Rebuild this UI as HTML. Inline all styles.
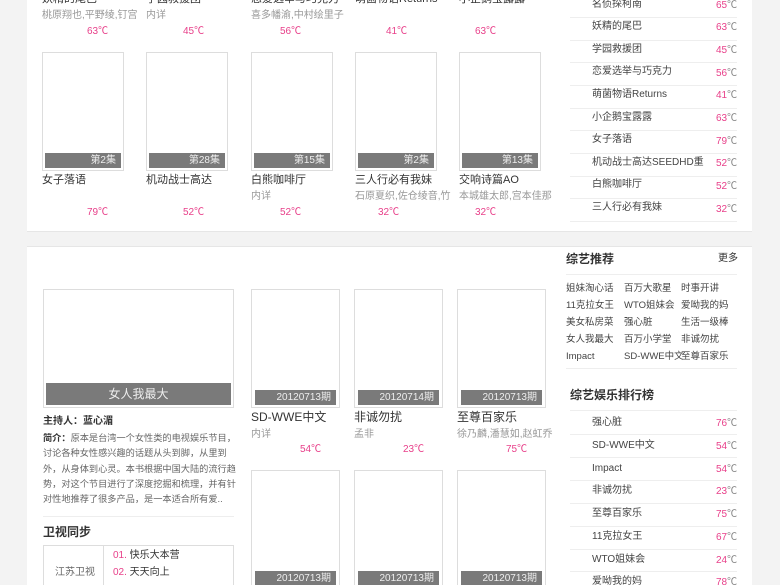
<!DOCTYPE html><html><head><meta charset="utf-8"><style>
*{margin:0;padding:0;box-sizing:border-box}
html,body{width:780px;height:585px;overflow:hidden}
body{background:#f3f3f3;font-family:"Liberation Sans","Noto Sans CJK SC",sans-serif;position:relative;color:#333;line-height:1.2}
.a{position:absolute;white-space:nowrap}
.p{position:absolute;background:#fff}
.box{position:absolute;border:1px solid #ddd;background:#fff}
.bar{position:absolute;background:#7a7a7a;color:#eee;font-size:10px;text-align:right;padding-right:5px}
.t{font-size:11px;color:#333}
.s{font-size:10px;color:#999}
.c{font-size:10px;color:#e8408a}
.line{position:absolute;height:1px;background:#eee}
.r{font-size:10px;color:#444}
.g{font-size:9.5px;color:#444;line-height:17px}
</style></head><body>
<div class="p" style="left:27px;top:-10px;width:725px;height:242px;border-bottom:1px solid #e6e6e6"></div>
<div class="p" style="left:27px;top:246px;width:725px;height:360px;border-top:1px solid #e6e6e6"></div>

<div class="a t" style="left:42px;top:-7px">妖精的尾巴</div><div class="a s" style="left:42px;top:10px">桃原翔也,平野绫,钉宫</div><div class="a c" style="left:87px;top:26px">63℃</div>
<div class="a t" style="left:146px;top:-7px">学园救援团</div><div class="a s" style="left:146px;top:10px">内详</div><div class="a c" style="left:183px;top:26px">45℃</div>
<div class="a t" style="left:251px;top:-7px">恋爱选举与巧克力</div><div class="a s" style="left:251px;top:10px">喜多幡渝,中村绘里子</div><div class="a c" style="left:280px;top:26px">56℃</div>
<div class="a t" style="left:355px;top:-7px">萌菌物语Returns</div><div class="a c" style="left:386px;top:26px">41℃</div>
<div class="a t" style="left:459px;top:-7px">小企鹅宝露露</div><div class="a c" style="left:475px;top:26px">63℃</div>

<div class="box" style="left:42px;top:52px;width:82px;height:119px"><div class="bar" style="left:2px;right:2px;top:100px;height:15px;line-height:15px">第2集</div></div>
<div class="box" style="left:146px;top:52px;width:82px;height:119px"><div class="bar" style="left:2px;right:2px;top:100px;height:15px;line-height:15px">第28集</div></div>
<div class="box" style="left:251px;top:52px;width:82px;height:119px"><div class="bar" style="left:2px;right:2px;top:100px;height:15px;line-height:15px">第15集</div></div>
<div class="box" style="left:355px;top:52px;width:82px;height:119px"><div class="bar" style="left:2px;right:2px;top:100px;height:15px;line-height:15px">第2集</div></div>
<div class="box" style="left:459px;top:52px;width:82px;height:119px"><div class="bar" style="left:2px;right:2px;top:100px;height:15px;line-height:15px">第13集</div></div>
<div class="a t" style="left:42px;top:174px">女子落语</div><div class="a c" style="left:87px;top:207px">79℃</div>
<div class="a t" style="left:146px;top:174px">机动战士高达</div><div class="a c" style="left:183px;top:207px">52℃</div>
<div class="a t" style="left:251px;top:174px">白熊咖啡厅</div><div class="a s" style="left:251px;top:191px">内详</div><div class="a c" style="left:280px;top:207px">52℃</div>
<div class="a t" style="left:355px;top:174px">三人行必有我妹</div><div class="a s" style="left:355px;top:191px">石原夏织,佐仓绫音,竹</div><div class="a c" style="left:378px;top:207px">32℃</div>
<div class="a t" style="left:459px;top:174px">交响诗篇AO</div><div class="a s" style="left:459px;top:191px">本城雄太郎,宫本佳那</div><div class="a c" style="left:475px;top:207px">32℃</div>

<div class="a r" style="left:592px;top:-1px">名侦探柯南</div><div class="a c" style="left:716px;top:0px">65<span style="color:#888">℃</span></div>
<div class="line" style="left:570px;top:17px;width:167px"></div>
<div class="a r" style="left:592px;top:21px">妖精的尾巴</div><div class="a c" style="left:716px;top:22px">63<span style="color:#888">℃</span></div>
<div class="line" style="left:570px;top:40px;width:167px"></div>
<div class="a r" style="left:592px;top:44px">学园救援团</div><div class="a c" style="left:716px;top:45px">45<span style="color:#888">℃</span></div>
<div class="line" style="left:570px;top:62px;width:167px"></div>
<div class="a r" style="left:592px;top:66px">恋爱选举与巧克力</div><div class="a c" style="left:716px;top:68px">56<span style="color:#888">℃</span></div>
<div class="line" style="left:570px;top:85px;width:167px"></div>
<div class="a r" style="left:592px;top:89px">萌菌物语Returns</div><div class="a c" style="left:716px;top:90px">41<span style="color:#888">℃</span></div>
<div class="line" style="left:570px;top:108px;width:167px"></div>
<div class="a r" style="left:592px;top:112px">小企鹅宝露露</div><div class="a c" style="left:716px;top:113px">63<span style="color:#888">℃</span></div>
<div class="line" style="left:570px;top:130px;width:167px"></div>
<div class="a r" style="left:592px;top:134px">女子落语</div><div class="a c" style="left:716px;top:136px">79<span style="color:#888">℃</span></div>
<div class="line" style="left:570px;top:153px;width:167px"></div>
<div class="a r" style="left:592px;top:157px">机动战士高达SEEDHD重</div><div class="a c" style="left:716px;top:158px">52<span style="color:#888">℃</span></div>
<div class="line" style="left:570px;top:176px;width:167px"></div>
<div class="a r" style="left:592px;top:179px">白熊咖啡厅</div><div class="a c" style="left:716px;top:181px">52<span style="color:#888">℃</span></div>
<div class="line" style="left:570px;top:198px;width:167px"></div>
<div class="a r" style="left:592px;top:202px">三人行必有我妹</div><div class="a c" style="left:716px;top:204px">32<span style="color:#888">℃</span></div>
<div class="line" style="left:570px;top:221px;width:167px"></div>

<div class="box" style="left:43px;top:289px;width:191px;height:119px"><div class="bar" style="left:2px;right:2px;top:93px;height:22px;line-height:22px;text-align:center;padding:0;font-size:12px">女人我最大</div></div>
<div class="a" style="left:43px;top:416px;font-size:10px;font-weight:bold;color:#333">主持人：蓝心湄</div>
<div class="a" style="left:43px;top:431px;font-size:9.2px;line-height:15.3px;color:#666"><b style="color:#333">简介：</b>原本是台湾一个女性类的电视娱乐节目，<br>讨论各种女性感兴趣的话题从头到脚，从里到<br>外，从身体到心灵。本书根据中国大陆的流行趋<br>势，对这个节目进行了深度挖掘和梳理，并有针<br>对性地推荐了很多产品，是一本适合所有爱..</div>
<div class="line" style="left:43px;top:516px;width:191px"></div>
<div class="a" style="left:43px;top:525px;font-size:12px;font-weight:bold;color:#333">卫视同步</div>
<div class="box" style="left:43px;top:545px;width:191px;height:50px"></div>
<div style="position:absolute;left:103px;top:545px;width:1px;height:40px;background:#ddd"></div>
<div class="a s" style="left:55px;top:567px;color:#666">江苏卫视</div>
<div class="a" style="left:113px;top:550px;font-size:10px;color:#333"><span style="color:#e8408a">01.</span> 快乐大本营</div>
<div class="a" style="left:113px;top:567px;font-size:10px;color:#333"><span style="color:#e8408a">02.</span> 天天向上</div>

<div class="box" style="left:251px;top:289px;width:89px;height:119px"><div class="bar" style="left:3px;right:3px;top:100px;height:15px;line-height:15px">20120713期</div></div>
<div class="box" style="left:354px;top:289px;width:89px;height:119px"><div class="bar" style="left:3px;right:3px;top:100px;height:15px;line-height:15px">20120714期</div></div>
<div class="box" style="left:457px;top:289px;width:89px;height:119px"><div class="bar" style="left:3px;right:3px;top:100px;height:15px;line-height:15px">20120713期</div></div>
<div class="a t" style="left:251px;top:410px;font-size:12px">SD-WWE中文</div><div class="a s" style="left:251px;top:429px">内详</div><div class="a c" style="left:300px;top:444px">54℃</div>
<div class="a t" style="left:354px;top:410px;font-size:12px">非诚勿扰</div><div class="a s" style="left:354px;top:429px">孟非</div><div class="a c" style="left:403px;top:444px">23℃</div>
<div class="a t" style="left:457px;top:410px;font-size:12px">至尊百家乐</div><div class="a s" style="left:457px;top:429px">徐乃麟,潘慧如,赵虹乔</div><div class="a c" style="left:506px;top:444px">75℃</div>
<div class="box" style="left:251px;top:470px;width:89px;height:130px"><div class="bar" style="left:3px;right:3px;top:100px;height:15px;line-height:15px">20120713期</div></div>
<div class="box" style="left:354px;top:470px;width:89px;height:130px"><div class="bar" style="left:3px;right:3px;top:100px;height:15px;line-height:15px">20120713期</div></div>
<div class="box" style="left:457px;top:470px;width:89px;height:130px"><div class="bar" style="left:3px;right:3px;top:100px;height:15px;line-height:15px">20120713期</div></div>

<div class="a" style="left:566px;top:252px;font-size:12px;font-weight:bold;color:#333">综艺推荐</div>
<div class="a" style="left:718px;top:253px;font-size:10px;color:#333">更多</div>
<div class="line" style="left:566px;top:274px;width:171px"></div>
<div class="a g" style="left:566px;top:280px">姐妹淘心话<br>11克拉女王<br>美女私房菜<br>女人我最大<br>Impact</div>
<div class="a g" style="left:624px;top:280px">百万大歌星<br>WTO姐妹会<br>强心脏<br>百万小学堂<br>SD-WWE中文</div>
<div class="a g" style="left:681px;top:280px">时事开讲<br>爱呦我的妈<br>生活一级棒<br>非诚勿扰<br>至尊百家乐</div>
<div class="line" style="left:566px;top:368px;width:171px"></div>
<div class="a" style="left:570px;top:388px;font-size:12px;font-weight:bold;color:#333">综艺娱乐排行榜</div>
<div class="line" style="left:570px;top:410px;width:167px"></div>
<div class="a r" style="left:592px;top:417px">强心脏</div><div class="a c" style="left:716px;top:418px">76<span style="color:#888">℃</span></div>
<div class="line" style="left:570px;top:434px;width:167px"></div>
<div class="a r" style="left:592px;top:440px">SD-WWE中文</div><div class="a c" style="left:716px;top:441px">54<span style="color:#888">℃</span></div>
<div class="line" style="left:570px;top:457px;width:167px"></div>
<div class="a r" style="left:592px;top:463px">Impact</div><div class="a c" style="left:716px;top:464px">54<span style="color:#888">℃</span></div>
<div class="line" style="left:570px;top:480px;width:167px"></div>
<div class="a r" style="left:592px;top:485px">非诚勿扰</div><div class="a c" style="left:716px;top:486px">23<span style="color:#888">℃</span></div>
<div class="line" style="left:570px;top:503px;width:167px"></div>
<div class="a r" style="left:592px;top:508px">至尊百家乐</div><div class="a c" style="left:716px;top:509px">75<span style="color:#888">℃</span></div>
<div class="line" style="left:570px;top:526px;width:167px"></div>
<div class="a r" style="left:592px;top:531px">11克拉女王</div><div class="a c" style="left:716px;top:532px">67<span style="color:#888">℃</span></div>
<div class="line" style="left:570px;top:549px;width:167px"></div>
<div class="a r" style="left:592px;top:554px">WTO姐妹会</div><div class="a c" style="left:716px;top:555px">24<span style="color:#888">℃</span></div>
<div class="line" style="left:570px;top:571px;width:167px"></div>
<div class="a r" style="left:592px;top:576px">爱呦我的妈</div><div class="a c" style="left:716px;top:577px">78<span style="color:#888">℃</span></div>
</body></html>
